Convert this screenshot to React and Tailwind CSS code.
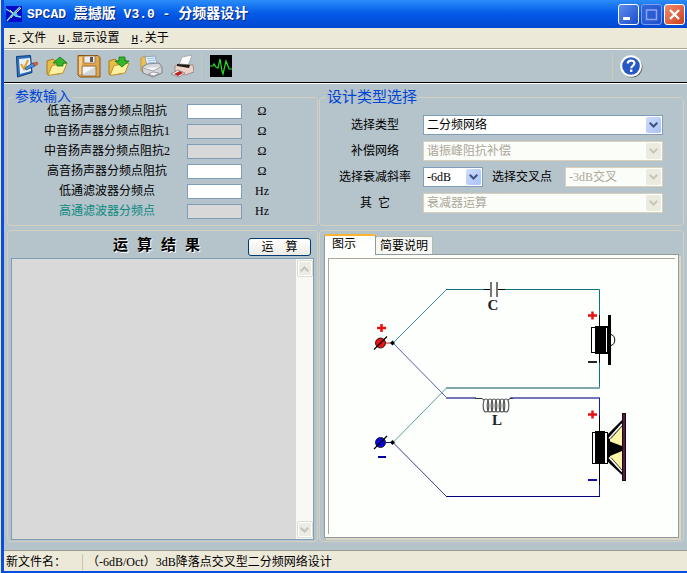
import React, { useState } from "react";

const parameters = [
  { id: "low-z", label: "低音扬声器分频点阻抗", unit: "Ω" },
  { id: "mid-z1", label: "中音扬声器分频点阻抗1", unit: "Ω", disabled: true },
  { id: "mid-z2", label: "中音扬声器分频点阻抗2", unit: "Ω", disabled: true },
  { id: "high-z", label: "高音扬声器分频点阻抗", unit: "Ω" },
  { id: "lowpass", label: "低通滤波器分频点", unit: "Hz" },
  { id: "highpass", label: "高通滤波器分频点", unit: "Hz", disabled: true, accent: true },
];

function LogoIcon() {
  return (
    <svg className="h-4 w-4 shrink-0" viewBox="0 0 16 16" aria-hidden="true">
      <rect width="16" height="16" fill="#0808c8" />
      <path d="M0 3l5 3 5 4 5 1M1 15l5-6 8-8" fill="none" stroke="#7fe0d8" strokeWidth="1.4" />
      <path d="M4 4l4 4-3 4M15 2L9 8l2 3" fill="none" stroke="#e6e65a" strokeWidth="1" />
      <path d="M6 8l4-2 2 4-2 1z" fill="#5cc8e8" />
    </svg>
  );
}

function TaskIcon() {
  return (
    <svg width="24" height="24" viewBox="0 0 24 24" aria-hidden="true">
      <path d="M1.500 2.500l14-1 1.500 17-14.500 4.500z" fill="#2a6fc0" stroke="#0d3c7c" />
      <path d="M4 5l11-1 1 13L5 20z" fill="#e4f1fb" />
      <path d="M6 10l3 5 4-9" fill="none" stroke="#e8a020" strokeWidth="2" />
      <path d="M10 14l8-5 2 3-9 4z" fill="#4c93dd" stroke="#0f4a94" strokeWidth=".8" />
      <path d="M18 9l4-1 1 2-3 2z" fill="#e06040" stroke="#803020" strokeWidth=".5" />
    </svg>
  );
}

function FolderIcon({ down }) {
  return (
    <svg width="24" height="24" viewBox="0 0 24 24" aria-hidden="true">
      <path d="M1 20V7l6-2 2 2 9-1v4l-5 10z" fill="#e9bd45" stroke="#a9781a" />
      <path d="M2 21.500l4-10 15-2.500-4 10z" fill="#fdf0a0" stroke="#c0922c" />
      {down ? (
        <path d="M11 3h6v4h4l-7 6-7-6h4z" fill="#35b52f" stroke="#137a17" strokeWidth=".8" />
      ) : (
        <path d="M14 3l7 6h-4v3h-6V9H7z" fill="#35b52f" stroke="#137a17" strokeWidth=".8" />
      )}
    </svg>
  );
}

function SaveIcon() {
  return (
    <svg width="24" height="24" viewBox="0 0 24 24" aria-hidden="true">
      <path d="M1 1.500h20l2 2V23H3l-2-2z" fill="#e0a64c" stroke="#8a5410" />
      <path d="M2 3h3v17H2z" fill="#f4cd86" />
      <path d="M7 2h11v7H7z" fill="#ededed" stroke="#8a6a40" strokeWidth=".7" />
      <path d="M13 3h3v5h-3z" fill="#555" />
      <path d="M5 12h14v10H5z" fill="#d2d6da" stroke="#946423" strokeWidth=".8" />
      <path d="M6 13h12L6 20z" fill="#f3f5f6" />
    </svg>
  );
}

function PrintFolderIcon() {
  return (
    <svg width="24" height="24" viewBox="0 0 24 24" aria-hidden="true">
      <path d="M2 4l4-2 2 2v14l-6-1z" fill="#f0c24a" stroke="#b98a25" strokeWidth=".7" />
      <path d="M6 3l10-1 2 8-10 2z" fill="#eaf4ff" stroke="#7a98bd" strokeWidth=".8" />
      <path d="M8 5l7-1M9 7l7-1M9 9l7-1" stroke="#7fb0e0" strokeWidth=".8" />
      <path d="M3 13l5-3 12-1 3 4v6l-9 4-10-4z" fill="#d4d6da" stroke="#777b84" strokeWidth=".9" />
      <path d="M4 14l10 3 8-4M9 20l5-2 6 1-5 3z" fill="#f6f6f6" stroke="#8d9098" strokeWidth=".8" />
    </svg>
  );
}

function PrinterIcon() {
  return (
    <svg width="24" height="24" viewBox="0 0 24 24" aria-hidden="true">
      <path d="M12 3l10-2-4 11-10 1z" fill="#fafafa" stroke="#a0a4aa" strokeWidth=".8" />
      <path d="M5 12l4-2 14 1 1 7-9 3-10-4z" fill="#ecd2c8" stroke="#9a7c74" strokeWidth=".8" />
      <path d="M7 10l13 1-1 3-12-2z" fill="#1c1c1c" />
      <path d="M1 20l7-4 7 3-6 4z" fill="#f4f4f4" stroke="#777" strokeWidth=".7" />
      <path d="M4 20l6-3 3 2-5 3z" fill="#c41e1e" />
    </svg>
  );
}

function WaveIcon() {
  return (
    <svg width="24" height="24" viewBox="0 0 24 24" aria-hidden="true">
      <rect x="1" y="1" width="22" height="22" fill="#000" />
      <path
        d="M1 12h3l1-2 2 3 2 1 2-9 2 12 1 3 3-13 2 5 1 3h3"
        fill="none"
        stroke="#22e022"
        strokeWidth="1.200"
      />
    </svg>
  );
}

function HelpIcon() {
  return (
    <svg width="24" height="24" viewBox="0 0 24 24" aria-hidden="true">
      <circle cx="13" cy="13" r="10.500" fill="#4c555c" />
      <circle cx="12" cy="12" r="10.800" fill="#fff" />
      <circle cx="12" cy="12" r="8.800" fill="#2758c4" />
      <path
        d="M8.800 9.600c0-4 6.600-4 6.600-.3 0 2.400-3.200 2.500-3.200 5"
        fill="none"
        stroke="#fff"
        strokeWidth="2.200"
      />
      <rect x="11" y="15.500" width="2.400" height="2.400" fill="#fff" />
    </svg>
  );
}

const tools = [
  { name: "设置", Icon: TaskIcon },
  { name: "打开", Icon: FolderIcon },
  { name: "保存", Icon: SaveIcon },
  { name: "另存", Icon: () => <FolderIcon down /> },
  { name: "打印预览", Icon: PrintFolderIcon },
  { name: "打印", Icon: PrinterIcon },
];

function TitleBar() {
  const base = "flex h-[21px] w-[21px] items-center justify-center rounded-[3px] border";
  return (
    <header className="flex h-7 items-center bg-linear-to-b from-[#2b8cf8] via-[#0458e8] to-[#0248d0] pr-[2px] pl-[2px]">
      <LogoIcon />
      <h1 className="ml-[5px] flex-1 text-[14px] leading-5 font-bold whitespace-pre text-white [text-shadow:1px_1px_0_#0a2a80]">
        <span className="font-['Liberation_Mono',monospace] text-[13px]">SPCAD </span>震撼版
        <span className="font-['Liberation_Mono',monospace] text-[13px]"> V3.0 - </span>分频器设计
      </h1>
      <div className="flex gap-[2px]">
        <button aria-label="最小化" className={`${base} border-white bg-linear-to-br from-[#5c8cf0] to-[#1c4cc8]`}>
          <svg width="19" height="19" viewBox="0 0 19 19">
            <rect x="4" y="12" width="7" height="3" fill="#fff" />
          </svg>
        </button>
        <button aria-label="最大化" disabled className={`${base} border-[#7c9cec] bg-linear-to-br from-[#3468dc] to-[#2050cc]`}>
          <svg width="19" height="19" viewBox="0 0 19 19">
            <path d="M4.500 5v9.500h10V5M4 5h11" fill="none" stroke="#8ca4f0" strokeWidth="1.500" />
          </svg>
        </button>
        <button aria-label="关闭" className={`${base} border-white bg-linear-to-br from-[#f08c6c] to-[#cc3c14]`}>
          <svg width="19" height="19" viewBox="0 0 19 19">
            <path d="M5 5l9 9M14 5l-9 9" stroke="#fff" strokeWidth="2.400" />
          </svg>
        </button>
      </div>
    </header>
  );
}

function MenuBar() {
  const items = [
    ["F", "文件"],
    ["U", "显示设置"],
    ["H", "关于"],
  ];
  return (
    <nav className="flex h-5 items-center gap-3 bg-[#ece9d8] pl-[5px]">
      {items.map(([key, text]) => (
        <button key={key} className="leading-4">
          <span className="font-['Liberation_Mono',monospace] text-[11px]">
            <u>{key}</u>.
          </span>
          {text}
        </button>
      ))}
    </nav>
  );
}

function Toolbar() {
  return (
    <div className="flex h-[35px] items-center border-t border-b border-t-[#aca899] border-b-black bg-[#b5c3cb] pl-[11px] shadow-[inset_0_1px_0_#fff]">
      <div className="flex gap-[7px]">
        {tools.map(({ name, Icon }) => (
          <button key={name} aria-label={name}>
            <Icon />
          </button>
        ))}
      </div>
      <div className="mx-[7px] h-7 w-px bg-[#c9c8c0]" />
      <button aria-label="频率曲线">
        <WaveIcon />
      </button>
      <div className="ml-auto h-7 w-px bg-[#d0cabd]" />
      <button aria-label="帮助" className="mr-11 ml-[6px]">
        <HelpIcon />
      </button>
    </div>
  );
}

function Select({ id, options, disabled, className = "" }) {
  return (
    <div className={`relative h-5 ${className}`}>
      <select
        id={id}
        disabled={disabled}
        className={`block h-5 w-full appearance-none border pr-5 pl-[3px] text-[12px] leading-4 opacity-100 outline-none ${
          disabled ? "border-[#d9cfbb] bg-[#fbfdf9] text-[#aca899]" : "border-[#7f9db9] bg-white text-black"
        }`}
      >
        {options.map((o) => (
          <option key={o}>{o}</option>
        ))}
      </select>
      <span
        className={`pointer-events-none absolute top-[2px] right-[2px] flex h-4 w-[15px] items-center justify-center rounded-[2px] ${
          disabled ? "bg-[#ebebe0] text-[#c9c7ba]" : "bg-linear-to-br from-[#cfdcfc] to-[#a9c2f8] text-[#3d5580]"
        }`}
      >
        <svg width="9" height="6" viewBox="0 0 9 6">
          <path d="M.7.700l3.800 3.800L8.300.7" fill="none" stroke="currentColor" strokeWidth="2" />
        </svg>
      </span>
    </div>
  );
}

const frame = "min-w-0 rounded-[4px] border border-[#d3d0bf]";

function ParameterPanel() {
  return (
    <fieldset className={`${frame} pb-1`}>
      <legend className="ml-[6px] px-px text-[14px] leading-4 text-[#0046d5]">参数输入</legend>
      <div className="-mt-1 pl-8">
        {parameters.map((p) => (
          <div key={p.id} className="flex h-5 items-center">
            <label htmlFor={p.id} className={`w-[134px] text-center ${p.accent ? "text-[#0a8a80]" : ""}`}>
              {p.label}
            </label>
            <input
              id={p.id}
              disabled={p.disabled}
              className={`ml-[13px] h-[15px] w-[55px] border border-[#7f9db9] px-1 ${
                p.disabled ? "bg-[#d8d8d8]" : "bg-white"
              }`}
            />
            <span className="w-10 text-center">{p.unit}</span>
          </div>
        ))}
      </div>
    </fieldset>
  );
}

function DesignPanel() {
  const label = "w-[86px] text-center";
  const row = "flex items-center gap-[5px]";
  return (
    <fieldset className={frame}>
      <legend className="ml-[6px] px-px text-[15px] leading-4 text-[#0046d5]">设计类型选择</legend>
      <div className="flex flex-col gap-[6px] pt-[10px] pr-5 pl-3">
        <div className={row}>
          <label htmlFor="type" className={label}>选择类型</label>
          <Select id="type" options={["二分频网络", "三分频网络"]} className="flex-1" />
        </div>
        <div className={row}>
          <label htmlFor="comp" className={label}>补偿网络</label>
          <Select id="comp" disabled options={["谐振峰阻抗补偿"]} className="flex-1" />
        </div>
        <div className={row}>
          <label htmlFor="slope" className={label}>选择衰减斜率</label>
          <Select id="slope" options={["-6dB", "-12dB", "-18dB"]} className="w-[60px]" />
          <label htmlFor="cross" className="ml-1 w-[68px]">选择交叉点</label>
          <Select id="cross" disabled options={["-3dB交叉"]} className="flex-1" />
        </div>
        <div className={row}>
          <label htmlFor="other" className={`${label} whitespace-pre`}>其  它</label>
          <Select id="other" disabled options={["衰减器运算"]} className="flex-1" />
        </div>
      </div>
    </fieldset>
  );
}

function ScrollButton({ name, path }) {
  return (
    <button
      aria-label={name}
      className="flex h-[17px] w-4 items-center justify-center rounded-[2px] border border-[#dcdcd0] bg-[#ecece4] shadow-[inset_0_0_0_1px_#fff]"
    >
      <svg width="9" height="6" viewBox="0 0 9 6">
        <path d={path} fill="none" stroke="#c4c3b8" strokeWidth="2" />
      </svg>
    </button>
  );
}

function ResultPanel() {
  return (
    <section className={`${frame} flex flex-col px-[3px] pb-px`}>
      <div className="flex h-[27px] items-center justify-end gap-12 pt-1 pr-[3px]">
        <h2 className="font-['Liberation_Mono','Noto_Sans_CJK_SC',monospace] text-[15px] leading-5 font-bold [text-shadow:1px_1px_0_#fff]">
          <label htmlFor="result">运 算 结 果</label>
        </h2>
        <button className="h-[18px] w-[63px] rounded-[3px] border border-[#003c74] bg-linear-to-b from-white to-[#ecebe6] leading-4 whitespace-pre">
          运    算
        </button>
      </div>
      <div className="flex flex-1 border border-[#7f9db9] bg-[#d9d9d9]">
        <textarea id="result" readOnly className="block flex-1 resize-none bg-transparent p-1 outline-none" />
        <div className="flex w-[17px] flex-col items-center justify-between bg-[#f8f8f4] py-px">
          <ScrollButton name="向上滚动" path="M.7 5.300l3.800-3.800 3.800 3.800" />
          <ScrollButton name="向下滚动" path="M.7.700l3.800 3.800L8.300.7" />
        </div>
      </div>
    </section>
  );
}

function Plus({ x, y }) {
  return <path d={`M${x - 4} ${y}h9M${x + 0.5} ${y - 4}v8`} stroke="#e81010" strokeWidth="2.500" />;
}

function Terminal({ y, color, lead }) {
  return (
    <g>
      <path d={`M386 ${y}h6`} stroke={lead} />
      <circle cx="380.500" cy={y} r="5" fill={color} stroke="#000" strokeWidth=".8" />
      <path d={`M374 ${y + 6.5}L387 ${y - 6.5}`} stroke="#000" strokeWidth="1.300" />
      <path d={`M390 ${y}l2.500-2.500 2.500 2.500-2.500 2.500z`} fill="#000" />
    </g>
  );
}

function Circuit() {
  return (
    <svg
      className="block h-[275px] w-[345px]"
      viewBox="329 259 345 275"
      fill="none"
      role="img"
      aria-label="二分频网络电路图"
    >
      <path d="M393 343L446.500 289.500" stroke="#3f9098" />
      <path d="M446 289.500H485M504 289.500H599.500V317M599.500 362V388" stroke="#0f7480" />
      <path d="M600 388H446" stroke="#7fa9a9" strokeWidth="2" />
      <path d="M446.500 388L393 442.500" stroke="#5f9c9f" />
      <path d="M393 343L446.500 397.500" stroke="#5a5ab0" />
      <path d="M446 398H476M510 398H600" stroke="#7474b8" strokeWidth="2" />
      <path d="M599.500 398V418M599.500 484V496.500" stroke="#1c1ca8" />
      <path d="M600 496.500H446" stroke="#000078" />
      <path d="M446.500 496.500L393 442.500" stroke="#3c3c98" />

      <path d="M484 289.500H490M498 289.500H505" stroke="#000" />
      <path d="M491 282V297M497 282V297" stroke="#777" strokeWidth="2" />
      <text x="493" y="310" textAnchor="middle" fill="#222" className="font-['Liberation_Serif',serif] text-[15px] font-bold">C</text>

      <path d="M475 398.500H482L484 400M508 400L510 398.500H513" stroke="#333" />
      {[485, 489, 493, 497, 501, 505].map((x) => (
        <ellipse key={x} cx={x + 1} cy="405.500" rx="2.800" ry="6.500" stroke="#555" strokeWidth="1.200" />
      ))}
      <text x="497" y="425" textAnchor="middle" fill="#222" className="font-['Liberation_Serif',serif] text-[15px] font-bold">L</text>

      <Plus x={381} y={328} />
      <Terminal y={343} color="#f01010" lead="#b02020" />
      <Terminal y={442.5} color="#0808e0" lead="#101080" />
      <path d="M378 457h8" stroke="#0000a8" strokeWidth="2" />

      <Plus x={592} y={315.5} />
      <path d="M599.500 315V363" stroke="#000" />
      <rect x="591.500" y="327.500" width="16" height="25" fill="#fff" stroke="#000" />
      <rect x="595" y="326" width="11" height="28" fill="#000" />
      <path d="M606 326.500h3M606 353.500h3" stroke="#000" />
      <rect x="608" y="315" width="3" height="50" fill="#000" />
      <path d="M611 334.500c5 1 5 10 0 11" stroke="#000" />
      <path d="M588 362h9" stroke="#222" strokeWidth="2" />

      <Plus x={592} y={414.5} />
      <path d="M599.500 416V485" stroke="#000" />
      <rect x="592.500" y="432.500" width="15" height="31" fill="#fff" stroke="#000" />
      <rect x="595" y="431" width="10" height="33" fill="#000" />
      <path d="M608 434L622 420V475L608 462Z" fill="#000" />
      <path d="M610 439L622 425V446L610 441.500ZM610 456L622 451V471L610 458Z" fill="#fdf5a8" />
      <path d="M609 438.500L622 424M609 457.500L622 471.500" stroke="#fff" strokeWidth="1.500" />
      <path d="M611 438.500L622 426M611 457.500L622 470" stroke="#000" strokeWidth=".7" />
      <rect x="622.500" y="413.500" width="3" height="67" fill="#5a1a3c" stroke="#1c0812" />
      <path d="M588 480h9" stroke="#1010b0" strokeWidth="2" />
    </svg>
  );
}

function DiagramPanel() {
  const [tab, setTab] = useState(0);
  return (
    <section className={`${frame} flex flex-col px-1 pt-[3px] pb-[3px]`}>
      <div className="flex items-end" role="tablist">
        <button
          role="tab"
          aria-selected={tab === 0}
          onClick={() => setTab(0)}
          className="relative -mb-px h-[21px] w-[52px] rounded-t-[3px] border border-t-2 border-[#919b9c] border-t-[#ffb52e] border-b-0 bg-[#fcfffc] pb-[3px] pl-[7px] text-left leading-4"
        >
          图示
        </button>
        <button
          role="tab"
          aria-selected={tab === 1}
          onClick={() => setTab(1)}
          className="h-[18px] w-[57px] rounded-t-[2px] border border-b-0 border-l-0 border-[#b5b8ac] bg-[#f6f7f2] text-center leading-4"
        >
          简要说明
        </button>
      </div>
      <div className="flex-1 border border-[#919b9c] bg-[#fcfffc] p-[3px] shadow-[2px_2px_0_#dcd6c4]">
        <div className="border-t border-l border-[#aca899]">
          <Circuit />
        </div>
      </div>
    </section>
  );
}

export default function App() {
  return (
    <div className="flex min-h-screen flex-col border-l border-[#e4e8ee] bg-[#b5c3cb] font-['Liberation_Serif','Noto_Sans_CJK_SC',sans-serif] text-[12px] leading-4 text-black">
      <div className="flex flex-1 flex-col border-b-2 border-l-[3px] border-[#0a4ee0]">
        <TitleBar />
        <MenuBar />
        <Toolbar />
        <main className="grid flex-1 grid-cols-[311fr_365fr] grid-rows-[auto_1fr] gap-x-px gap-y-1 border-t border-white px-[3px] pt-[5px] pb-2">
          <ParameterPanel />
          <DesignPanel />
          <ResultPanel />
          <DiagramPanel />
        </main>
        <footer className="flex h-[21px] items-center border-t border-[#9c9a8c] bg-[#ece9d8] pt-[2px] whitespace-pre">
          <span className="h-4 w-[79px] border-r border-[#c8c4b4] pl-[2px]">新文件名：</span>
          <span className="pl-1">（-6dB/Oct）3dB降落点交叉型二分频网络设计</span>
        </footer>
      </div>
    </div>
  );
}
